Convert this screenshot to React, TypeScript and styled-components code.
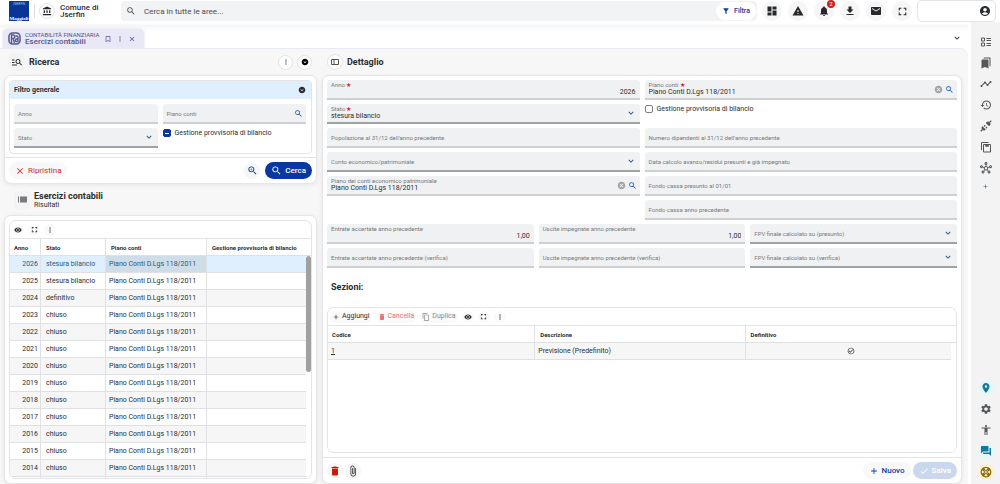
import React, { useCallback, useEffect, useId, useRef, useState } from "react";
import styled, { createGlobalStyle } from "styled-components";
import {
  MdAccessibility,
  MdAccountBalance,
  MdAccountCircle,
  MdAdd,
  MdAttachFile,
  MdBookmarkBorder,
  MdBookmarks,
  MdCancel,
  MdCheck,
  MdCheckCircleOutline,
  MdClose,
  MdContentCopy,
  MdDashboard,
  MdDelete,
  MdDownload,
  MdExpandCircleDown,
  MdExpandMore,
  MdFilterAlt,
  MdForum,
  MdFullscreen,
  MdHistory,
  MdLocationOn,
  MdMail,
  MdManageSearch,
  MdMoreVert,
  MdNotifications,
  MdOutlineHub,
  MdRemoveRedEye,
  MdSearch,
  MdSettings,
  MdTimeline,
  MdWarning,
  MdZoomIn,
} from "react-icons/md";

const GlobalStyle = createGlobalStyle`
  *, *::before, *::after { box-sizing: border-box; }
  body {
    margin: 0;
    background: #fff;
    color: #2b2d30;
    font-family: Roboto, "Liberation Sans", sans-serif;
    font-size: 7px;
    line-height: 9px;
  }
  button, input, select { font: inherit; color: inherit; margin: 0; padding: 0; }
  button { cursor: pointer; }
  svg { display: block; flex: none; }
  h1, h2, h3, p { margin: 0; }
`;

const Shell = styled.div`
  display: flex;
  flex-direction: column;
  height: 100vh;
  overflow: hidden;
`;

/* ---------- header ---------- */

const Header = styled.header`
  display: flex;
  align-items: center;
  flex: none;
  height: 22px;
  padding: 0 4px 0 9px;
  background: #fff;
`;

const Brand = styled.div`
  display: flex;
  align-items: center;
  width: 112px;
`;

const Divider = styled.span`
  width: 1px;
  height: 14px;
  margin: 0 4px 0 5px;
  background: #dcdde0;
`;

const RoundButton = styled.button<{ $size?: number; $tone?: string; $outlined?: boolean; $bg?: string }>`
  position: relative;
  display: inline-flex;
  align-items: center;
  justify-content: center;
  flex: none;
  width: ${(p) => p.$size ?? 12}px;
  height: ${(p) => p.$size ?? 12}px;
  border: ${(p) => (p.$outlined ? "1px solid #e2e3e6" : "0")};
  border-radius: 50%;
  background: ${(p) => p.$bg ?? (p.$outlined ? "#fff" : "#f6f6f6")};
  color: ${(p) => p.$tone ?? "#26282b"};
`;

const BrandName = styled.div`
  width: 48px;
  margin-left: 5px;
  font-size: 8px;
  line-height: 7px;
  font-weight: 500;
`;

const SearchBar = styled.div`
  display: flex;
  align-items: center;
  flex: 1;
  height: 20px;
  padding: 0 1px 0 5px;
  border-radius: 4px;
  background: #f1f3f4;
`;

const SearchInput = styled.input`
  flex: 1;
  min-width: 0;
  margin-left: 8px;
  border: 0;
  outline: 0;
  background: transparent;
  font-size: 8px;
  &::placeholder { color: #494c50; opacity: 1; }
`;

const FilterButton = styled.button`
  display: flex;
  align-items: center;
  gap: 4px;
  height: 18px;
  padding: 0 6px;
  border: 0;
  border-radius: 9px;
  background: #fff;
  color: #0a3da3;
  font-weight: 500;
`;

const HeaderActions = styled.div`
  display: flex;
  gap: 6px;
  margin: 0 5px;
`;

const Count = styled.span`
  position: absolute;
  top: -1px;
  right: -1px;
  width: 8px;
  height: 8px;
  border-radius: 50%;
  background: #cf1f1f;
  color: #fff;
  font-size: 6px;
  line-height: 8px;
  text-align: center;
`;

const UserBox = styled.button`
  display: flex;
  align-items: center;
  justify-content: flex-end;
  width: 79px;
  height: 22px;
  padding: 0 4px;
  border: 1px solid #e3e4e7;
  border-radius: 5px;
  background: #fff;
`;

/* ---------- frame ---------- */

const Frame = styled.div`
  display: flex;
  flex: 1;
  min-height: 0;
`;

const Main = styled.main`
  display: flex;
  flex-direction: column;
  flex: 1;
  min-width: 0;
  padding-right: 3px;
  background: #fff;
`;

const TabBar = styled.div`
  display: flex;
  align-items: flex-end;
  justify-content: space-between;
  flex: none;
  height: 26px;
  padding: 0 6px 0 3px;
  background: linear-gradient(#fff 2px, #f5f5f5 3px, #fff 9px);
`;

const Tab = styled.div`
  display: flex;
  align-items: center;
  width: 141px;
  height: 19px;
  padding: 0 5px;
  border-radius: 5px 5px 0 0;
  background: #e8e8f7;
  box-shadow: 0 0 3px #d9d9ec;
  color: #54568c;
`;

const TabText = styled.div`
  flex: 1;
  margin-left: 4px;
  font-size: 8px;
  line-height: 8px;
  font-weight: 500;
  white-space: nowrap;
`;

const TabArea = styled.div`
  font-size: 6px;
  line-height: 7px;
  font-weight: 400;
`;

const TabActions = styled.div`
  display: flex;
  align-items: center;
  gap: 4px;
  margin-right: 3px;
`;

const PlainButton = styled.button<{ $tone?: string }>`
  display: inline-flex;
  align-items: center;
  border: 0;
  background: transparent;
  color: ${(p) => p.$tone ?? "inherit"};
`;

const Collapse = styled(PlainButton)`
  height: 20px;
`;

const Workspace = styled.div`
  display: grid;
  grid-template-columns: minmax(0, 313fr) minmax(0, 640fr);
  gap: 5px;
  flex: 1;
  min-height: 0;
  padding: 0 6px 0 4px;
  border-top: 1px solid #eaeaf5;
  border-top-right-radius: 8px;
  background: #f7f7f7;
`;

const Column = styled.section`
  display: flex;
  flex-direction: column;
  min-height: 0;
`;

const PaneHead = styled.div`
  display: flex;
  align-items: center;
  flex: none;
  gap: 4px;
  height: 26px;
  padding: 0 5px;
`;

const PaneTitle = styled.h2`
  flex: 1;
  font-size: 9px;
  line-height: 11px;
  font-weight: 700;
`;

const HeadIcon = styled.span`
  display: inline-flex;
  align-items: center;
  justify-content: center;
  width: 16px;
  height: 18px;
  border-radius: 4px;
  background: #f3f3f3;
`;

const Card = styled.div<{ $fill?: boolean }>`
  display: flex;
  flex-direction: column;
  flex: ${(p) => (p.$fill ? "1" : "none")};
  min-height: 0;
  border: 1px solid #e6e6e8;
  border-radius: 7px;
  background: #fff;
  box-shadow: 0 1px 4px rgba(0, 0, 0, 0.08);
`;

const FilterBox = styled.fieldset`
  min-width: 0;
  margin: 4px 4px 3px;
  padding: 0;
  border: 1px solid #e3e5e8;
  border-radius: 4px;
  overflow: hidden;
`;

const FilterHead = styled.div`
  display: flex;
  align-items: center;
  justify-content: space-between;
  height: 18px;
  padding: 0 5px 0 4px;
  background: #e0effd;
  font-weight: 700;
`;

const FilterGrid = styled.div`
  display: grid;
  grid-template-columns: 1fr 1fr;
  gap: 4px 5px;
  padding: 5px 5px 5px 4px;
`;

const Footer = styled.div`
  display: flex;
  align-items: center;
  justify-content: space-between;
  flex: none;
  height: 26px;
  padding: 0 4px;
  border-top: 1px solid #e3e4e6;
`;

const Group = styled.div<{ $gap: number }>`
  display: flex;
  align-items: center;
  gap: ${(p) => p.$gap}px;
`;

const Pill = styled.button<{ $tone: string; $bg: string; $light?: boolean }>`
  display: inline-flex;
  align-items: center;
  gap: 3px;
  height: 17px;
  padding: 0 6px;
  border: 0;
  border-radius: 9px;
  background: ${(p) => p.$bg};
  color: ${(p) => p.$tone};
  font-size: 8px;
  font-weight: ${(p) => (p.$light ? 400 : 500)};
`;

/* ---------- fields ---------- */

const FieldBox = styled.div<{ $kind: string }>`
  position: relative;
  display: flex;
  align-items: center;
  gap: 2px;
  height: 20px;
  padding: 0 ${(p) => (p.$kind === "lookup" ? 3 : 4)}px;
  border-bottom: 2px solid ${(p) => (p.$kind === "select" ? "#9fa2a5" : "#cdcfd1")};
  border-radius: 3px 3px 0 0;
  background: #eff1f2;
`;

const FieldLabel = styled.label<{ $raised?: boolean }>`
  position: absolute;
  left: 4px;
  top: ${(p) => (p.$raised ? 1 : 6)}px;
  color: #76797d;
  font-size: 6px;
  line-height: 7px;
  white-space: nowrap;
  pointer-events: none;
`;

const Star = styled.span`
  margin-left: 1px;
  color: #d92020;
`;

const TextInput = styled.input<{ $right?: boolean; $lookup?: boolean }>`
  flex: 1;
  min-width: 0;
  height: 18px;
  padding: 6px 0 0 ${(p) => (p.$lookup ? 1 : 0)}px;
  border: 0;
  outline: 0;
  background: transparent;
  text-align: ${(p) => (p.$right ? "right" : "left")};
`;

const SelectInput = styled.select`
  appearance: none;
  flex: 1;
  min-width: 0;
  height: 18px;
  padding-top: 7px;
  border: 0;
  outline: 0;
  background: transparent;
`;

const CheckLabel = styled.label`
  display: flex;
  align-items: center;
  gap: 4px;
  height: 10px;
  white-space: nowrap;
`;

const Check = styled.input`
  appearance: none;
  display: grid;
  place-items: center;
  width: 8px;
  height: 8px;
  border: 1px solid #7c7f83;
  border-radius: 2px;
  background: #fff;
  &:indeterminate {
    border-color: #0a37a0;
    background: #0a37a0;
  }
  &:indeterminate::after {
    content: "";
    width: 4px;
    height: 1px;
    background: #fff;
  }
`;

const FormBody = styled.div`
  display: flex;
  flex-direction: column;
  flex: 1;
  min-height: 0;
  padding: 4px;
`;

const FormRow = styled.div<{ $cols: number }>`
  display: grid;
  grid-template-columns: repeat(${(p) => p.$cols}, minmax(0, 1fr));
  gap: 4px 5px;
  margin-bottom: 4px;
`;

const FormColumn = styled.div`
  display: grid;
  grid-auto-rows: 20px;
  gap: 4px;
`;

const SectionTitle = styled.h3`
  padding: 9px 4px 14px;
  font-size: 9px;
  line-height: 12px;
  font-weight: 700;
`;

/* ---------- grids ---------- */

const GridCard = styled.div<{ $margin?: number }>`
  display: flex;
  flex-direction: column;
  flex: 1;
  min-height: 0;
  margin: ${(p) => p.$margin ?? 0}px;
  border: 1px solid #e3e4e8;
  border-radius: 7px;
  overflow: hidden;
`;

const GridToolbar = styled.div`
  display: flex;
  align-items: center;
  flex: none;
  gap: 4px;
  height: 17px;
  padding: 0 2px;
`;

const ToolButton = styled.button<{ $tone?: string }>`
  display: inline-flex;
  align-items: center;
  gap: 2px;
  height: 12px;
  padding: 0 2px;
  border: 0;
  border-radius: 6px;
  background: #fafafa;
  color: ${(p) => p.$tone ?? "#2b2d30"};
`;

const ScrollFrame = styled.div`
  position: relative;
  display: flex;
  flex: 1;
  min-height: 0;
  border-top: 1px solid #e3e4e6;
`;

const Scroller = styled.div`
  flex: 1;
  min-width: 0;
  overflow-x: hidden;
  overflow-y: auto;
  scrollbar-width: none;
`;

const Gutter = styled.div`
  position: absolute;
  top: 17px;
  right: 0;
  bottom: 0;
  width: 5px;
  background: #fff;
`;

const Thumb = styled.div`
  position: relative;
  width: 5px;
  border-radius: 3px;
  background: #a0a0a0;
`;

const Table = styled.table`
  width: 100%;
  table-layout: fixed;
  border-collapse: separate;
  border-spacing: 0;
`;

const Th = styled.th<{ $w?: string; $first?: boolean }>`
  position: sticky;
  top: 0;
  width: ${(p) => p.$w ?? "auto"};
  height: 17px;
  padding: 0 5px;
  border-right: 1px solid #e0e1e4;
  border-bottom: 1px solid #dfe0e2;
  background: #fff;
  font-size: 6px;
  font-weight: 700;
  text-align: left;
  white-space: nowrap;
  &:first-child { padding-left: 4px; }
  &:last-child { border-right: 0; }
`;

const Td = styled.td<{ $align?: string; $active?: boolean; $pad?: number }>`
  height: 17px;
  padding: 0 ${(p) => p.$pad ?? 3}px;
  border-right: 1px solid #e0e1e4;
  border-bottom: 1px solid #dfe0e2;
  background: ${(p) => (p.$active ? "#cfdde9" : "transparent")};
  text-align: ${(p) => p.$align ?? "left"};
  white-space: nowrap;
  &:last-child { border-right: 0; }
  > svg { margin: 0 auto; }
`;

const Tr = styled.tr<{ $selected?: boolean; $shade?: boolean }>`
  background: ${(p) => (p.$selected ? "#e0effd" : p.$shade ? "#f6f6f7" : "#fff")};
  color: ${(p) => (p.$selected ? "#2d5876" : "inherit")};
`;

const CodeLink = styled.a`
  color: inherit;
  text-decoration: underline;
`;

const ResultsHead = styled.div`
  display: flex;
  align-items: center;
  gap: 4px;
  flex: none;
  height: 31px;
  padding: 0 10px;
`;

const ResultsTitle = styled.h2`
  font-size: 9px;
  line-height: 10px;
  font-weight: 700;
`;

const ResultsNote = styled.p`
  line-height: 8px;
`;

/* ---------- side rail ---------- */

const Rail = styled.nav`
  display: flex;
  flex-direction: column;
  justify-content: space-between;
  align-items: center;
  flex: none;
  width: 29px;
  padding: 12px 0 4px;
  background: #f3f3f3;
`;

const RailGroup = styled.div`
  display: flex;
  flex-direction: column;
  gap: 5px;
`;

const RailButton = styled.button<{ $tone?: string; $glow?: string; $short?: boolean }>`
  display: flex;
  align-items: center;
  justify-content: center;
  width: 16px;
  height: ${(p) => (p.$short ? 10 : 16)}px;
  border: 0;
  border-radius: 50%;
  background: ${(p) => p.$glow ?? "transparent"};
  color: ${(p) => p.$tone ?? "#54575a"};
`;

/* ---------- drawings ---------- */

const Logo = () => (
  <svg width="20" height="20" viewBox="0 0 20 20" role="img" aria-label="Maggioli">
    <rect width="20" height="20" fill="#0a3596" />
    <text x="10" y="4" fill="#b9c8ee" fontSize="3" fontFamily="Liberation Sans, sans-serif" textAnchor="middle">
      JSERFIN
    </text>
    <text x="10" y="19" fill="#fff" fontSize="5" fontWeight="700" fontFamily="Liberation Serif, serif" textAnchor="middle">
      Maggioli
    </text>
  </svg>
);

const TabLogo = () => (
  <svg width="13" height="13" viewBox="0 0 26 26" fill="none" stroke="currentColor">
    <rect x="2" y="2" width="22" height="22" rx="7" strokeWidth="3" />
    <path d="M7 22V6h3a3.500 3.500 0 0 1 0 7H7m3 0 3 9M15 8h3a2 2 0 0 1 2 2v9h-3a2.500 2.500 0 0 1 0-5h3" strokeWidth="2.600" />
  </svg>
);

const ListIcon = () => (
  <svg width="9" height="9" viewBox="0 0 18 18" fill="#77797c">
    <path d="M0 3h2v12H0zM4 3h14v12H4z" />
  </svg>
);

const ChecklistIcon = () => (
  <svg width="12" height="12" viewBox="0 0 24 24" fill="none" stroke="currentColor" strokeWidth="2">
    <path d="M3 4h6v6H3zM3 14h6v6H3zM13 5h9M13 9h9M13 15h9M13 19h9" />
  </svg>
);

const ColumnsIcon = () => (
  <svg width="8" height="8" viewBox="0 0 16 16" fill="none" stroke="#4a4032" strokeWidth="1.800">
    <path d="M1 3h14v10H1zM6 3v10" />
  </svg>
);

const PlugIcon = () => (
  <svg width="12" height="12" viewBox="0 0 24 24" fill="currentColor" stroke="currentColor">
    <path d="m12 6 6 6 2-2a4.500 4.500 0 0 0-6-6zM5 13l6 6-1 1a4.500 4.500 0 0 1-6-6z" />
    <path d="m19 5 3.500-3.500M5 19l-3.500 3.500M8 13l2.500-2.500M11.500 16.500 14 14" fill="none" strokeWidth="2.400" />
  </svg>
);

const ClipboardIcon = () => (
  <svg width="12" height="12" viewBox="0 0 24 24" fill="none" stroke="currentColor" strokeWidth="2">
    <path d="M17 3H3v15M7 7h14v15H7z" />
    <path d="M11 7h6v4h-6z" fill="currentColor" strokeWidth="1" />
  </svg>
);

const LifebuoyIcon = () => (
  <svg width="12" height="12" viewBox="0 0 24 24" fill="none" stroke="#8b6a0c">
    <circle cx="12" cy="12" r="9.500" strokeWidth="2.500" />
    <circle cx="12" cy="12" r="3" strokeWidth="2" />
    <path d="m5 5 4 4M19 5l-4 4M5 19l4-4M19 19l-4-4" strokeWidth="6" />
  </svg>
);

/* ---------- composed parts ---------- */

type FieldProps = {
  label: string;
  value?: string;
  required?: boolean;
  right?: boolean;
  kind?: "text" | "select" | "lookup";
  clearable?: boolean;
};

function Field({ label, value = "", required, right, kind = "text", clearable }: FieldProps) {
  const id = useId();
  return (
    <FieldBox $kind={kind}>
      <FieldLabel htmlFor={id} $raised={value !== ""}>
        {label}
        {required && <Star>★</Star>}
      </FieldLabel>
      {kind === "select" ? (
        <SelectInput id={id} defaultValue={value}>
          <option value={value}>{value}</option>
        </SelectInput>
      ) : (
        <TextInput id={id} defaultValue={value} $right={right} $lookup={kind === "lookup"} />
      )}
      {clearable && (
        <PlainButton $tone="#a2a4a6" aria-label="Svuota">
          <MdCancel size={9} />
        </PlainButton>
      )}
      {kind === "lookup" && (
        <PlainButton $tone="#1c50b4" aria-label="Cerca">
          <MdSearch size={9} />
        </PlainButton>
      )}
      {kind === "select" && <MdExpandMore size={10} color="#1d5482" />}
    </FieldBox>
  );
}

function CheckField({ label, mixed }: { label: string; mixed?: boolean }) {
  const ref = useRef<HTMLInputElement>(null);
  useEffect(() => {
    if (ref.current) ref.current.indeterminate = Boolean(mixed);
  }, [mixed]);
  return (
    <CheckLabel>
      <Check type="checkbox" ref={ref} />
      {label}
    </CheckLabel>
  );
}

const HEAD_HEIGHT = 17;

function ScrollArea({ children }: { children: React.ReactNode }) {
  const ref = useRef<HTMLDivElement>(null);
  const [thumb, setThumb] = useState({ size: 0, top: 0 });

  const measure = useCallback(() => {
    const el = ref.current;
    if (!el) return;
    const track = el.clientHeight - HEAD_HEIGHT;
    const content = el.scrollHeight - HEAD_HEIGHT;
    setThumb(
      content > track
        ? { size: Math.round((track * track) / content), top: Math.round((el.scrollTop * track) / content) }
        : { size: 0, top: 0 },
    );
  }, []);

  useEffect(() => {
    measure();
    window.addEventListener("resize", measure);
    return () => window.removeEventListener("resize", measure);
  }, [measure]);

  return (
    <ScrollFrame>
      <Scroller ref={ref} onScroll={measure}>
        {children}
      </Scroller>
      <Gutter>
        <Thumb style={{ height: thumb.size, top: thumb.top }} />
      </Gutter>
    </ScrollFrame>
  );
}

const PLAN = "Piano Conti D.Lgs 118/2011";

const years = Array.from({ length: 25 }, (_, i) => ({
  year: 2026 - i,
  state: i < 2 ? "stesura bilancio" : i === 2 ? "definitivo" : "chiuso",
}));

const GridTools = () => (
  <Group $gap={4}>
    <RoundButton aria-label="Visualizza" $bg="#fafafa">
      <MdRemoveRedEye size={8} />
    </RoundButton>
    <RoundButton aria-label="Schermo intero" $bg="#fafafa">
      <MdFullscreen size={9} />
    </RoundButton>
    <RoundButton aria-label="Altro" $bg="#fafafa">
      <MdMoreVert size={8} />
    </RoundButton>
  </Group>
);

export default function App() {
  return (
    <Shell>
      <GlobalStyle />
      <Header>
        <Brand>
          <Logo />
          <Divider />
          <RoundButton $size={16} $outlined aria-label="Ente">
            <MdAccountBalance size={10} />
          </RoundButton>
          <BrandName>Comune di Jserfin</BrandName>
        </Brand>
        <SearchBar>
          <MdSearch size={10} color="#4c4f52" />
          <SearchInput aria-label="Cerca" placeholder="Cerca in tutte le aree..." />
          <FilterButton>
            <MdFilterAlt size={8} />
            Filtra
          </FilterButton>
        </SearchBar>
        <HeaderActions>
          <RoundButton $size={20} aria-label="Cruscotto"><MdDashboard size={12} /></RoundButton>
          <RoundButton $size={20} aria-label="Avvisi"><MdWarning size={12} /></RoundButton>
          <RoundButton $size={20} aria-label="Notifiche">
            <MdNotifications size={12} />
            <Count>2</Count>
          </RoundButton>
          <RoundButton $size={20} aria-label="Download"><MdDownload size={12} /></RoundButton>
          <RoundButton $size={20} aria-label="Messaggi"><MdMail size={12} /></RoundButton>
          <RoundButton $size={20} aria-label="Schermo intero"><MdFullscreen size={13} /></RoundButton>
        </HeaderActions>
        <UserBox aria-label="Utente">
          <MdAccountCircle size={12} />
        </UserBox>
      </Header>

      <Frame>
        <Main>
          <TabBar>
            <Tab>
              <TabLogo />
              <TabText>
                <TabArea>CONTABILITÀ FINANZIARIA</TabArea>
                Esercizi contabili
              </TabText>
              <TabActions>
                <PlainButton aria-label="Segnalibro"><MdBookmarkBorder size={8} /></PlainButton>
                <PlainButton aria-label="Altro"><MdMoreVert size={8} /></PlainButton>
                <PlainButton aria-label="Chiudi"><MdClose size={8} /></PlainButton>
              </TabActions>
            </Tab>
            <Collapse aria-label="Espandi"><MdExpandMore size={10} /></Collapse>
          </TabBar>

          <Workspace>
            <Column>
              <PaneHead>
                <HeadIcon><MdManageSearch size={12} /></HeadIcon>
                <PaneTitle>Ricerca</PaneTitle>
                <RoundButton $size={15} $outlined $tone="#1d5482" aria-label="Altro"><MdMoreVert size={8} /></RoundButton>
                <RoundButton $size={15} $outlined $tone="#000" aria-label="Comprimi"><MdExpandCircleDown size={8} /></RoundButton>
              </PaneHead>

              <Card>
                <FilterBox>
                  <FilterHead>
                    Filtro generale
                    <PlainButton aria-label="Comprimi filtro"><MdExpandCircleDown size={8} /></PlainButton>
                  </FilterHead>
                  <FilterGrid>
                    <Field label="Anno" />
                    <Field label="Piano conti" kind="lookup" />
                    <Field label="Stato" kind="select" />
                    <CheckField label="Gestione provvisoria di bilancio" mixed />
                  </FilterGrid>
                </FilterBox>
                <Footer>
                  <Pill $tone="#cb2c2c" $bg="#f8f8f8" $light>
                    <MdClose size={10} />
                    Ripristina
                  </Pill>
                  <Group $gap={5}>
                    <RoundButton $size={16} $tone="#0a3da3" aria-label="Ricerca avanzata"><MdZoomIn size={11} /></RoundButton>
                    <Pill $tone="#fff" $bg="#0a37a0">
                      <MdSearch size={11} />
                      Cerca
                    </Pill>
                  </Group>
                </Footer>
              </Card>

              <ResultsHead>
                <HeadIcon><ListIcon /></HeadIcon>
                <div>
                  <ResultsTitle>Esercizi contabili</ResultsTitle>
                  <ResultsNote>Risultati</ResultsNote>
                </div>
              </ResultsHead>

              <Card $fill>
                <GridCard $margin={4}>
                  <GridToolbar>
                    <GridTools />
                  </GridToolbar>
                  <ScrollArea>
                    <Table>
                      <thead>
                        <tr>
                          <Th $w="31px">Anno</Th>
                          <Th $w="65px">Stato</Th>
                          <Th $w="101px">Piano conti</Th>
                          <Th>Gestione provvisoria di bilancio</Th>
                        </tr>
                      </thead>
                      <tbody>
                        {years.map((row, i) => (
                          <Tr key={row.year} $selected={i === 0} $shade={i % 2 === 0}>
                            <Td $align="right" $pad={2}>{row.year}</Td>
                            <Td $pad={5}>{row.state}</Td>
                            <Td $active={i === 0}>{PLAN}</Td>
                            <Td />
                          </Tr>
                        ))}
                      </tbody>
                    </Table>
                  </ScrollArea>
                </GridCard>
              </Card>
            </Column>

            <Column>
              <PaneHead>
                <RoundButton $size={16} $outlined aria-label="Pannelli"><ColumnsIcon /></RoundButton>
                <PaneTitle>Dettaglio</PaneTitle>
              </PaneHead>
              <Card $fill>
                <FormBody>
                  <FormRow $cols={2}>
                    <FormColumn>
                      <Field label="Anno" value="2026" required right />
                      <Field label="Stato" value="stesura bilancio" required kind="select" />
                      <Field label="Popolazione al 31/12 dell'anno precedente" />
                      <Field label="Conto economico/patrimoniale" kind="select" />
                      <Field label="Piano dei conti economico patrimoniale" value={PLAN} kind="lookup" clearable />
                    </FormColumn>
                    <FormColumn>
                      <Field label="Piano conti" value={PLAN} required kind="lookup" clearable />
                      <CheckField label="Gestione provvisoria di bilancio" />
                      <Field label="Numero dipendenti al 31/12 dell'anno precedente" />
                      <Field label="Data calcolo avanzo/residui presunti e già impegnato" />
                      <Field label="Fondo cassa presunto al 01/01" />
                      <Field label="Fondo cassa anno precedente" />
                    </FormColumn>
                  </FormRow>
                  <FormRow $cols={3}>
                    <Field label="Entrate accertate anno precedente" value="1,00" right />
                    <Field label="Uscite impegnate anno precedente" value="1,00" right />
                    <Field label="FPV finale calcolato su (presunto)" kind="select" />
                    <Field label="Entrate accertate anno precedente (verifica)" />
                    <Field label="Uscite impegnate anno precedente (verifica)" />
                    <Field label="FPV finale calcolato su (verifica)" kind="select" />
                  </FormRow>
                  <SectionTitle>Sezioni:</SectionTitle>
                  <GridCard>
                    <GridToolbar>
                      <ToolButton><MdAdd size={8} />Aggiungi</ToolButton>
                      <ToolButton $tone="#e57373"><MdDelete size={8} />Cancella</ToolButton>
                      <ToolButton $tone="#85878a"><MdContentCopy size={8} />Duplica</ToolButton>
                      <GridTools />
                    </GridToolbar>
                    <ScrollArea>
                      <Table>
                        <thead>
                          <tr>
                            <Th $w="33%">Codice</Th>
                            <Th>Descrizione</Th>
                            <Th>Definitivo</Th>
                          </tr>
                        </thead>
                        <tbody>
                          <Tr $shade>
                            <Td><CodeLink href="#1">1</CodeLink></Td>
                            <Td>Previsione (Predefinito)</Td>
                            <Td><MdCheckCircleOutline size={8} /></Td>
                          </Tr>
                        </tbody>
                      </Table>
                    </ScrollArea>
                  </GridCard>
                </FormBody>
                <Footer>
                  <Group $gap={2}>
                    <RoundButton $size={16} $tone="#c9190b" aria-label="Elimina"><MdDelete size={12} /></RoundButton>
                    <RoundButton $size={16} aria-label="Allegati"><MdAttachFile size={12} /></RoundButton>
                  </Group>
                  <Group $gap={2}>
                    <Pill $tone="#0a3da3" $bg="#f8f8f8"><MdAdd size={10} />Nuovo</Pill>
                    <Pill $tone="#fff" $bg="#cbd7ec" disabled><MdCheck size={10} />Salva</Pill>
                  </Group>
                </Footer>
              </Card>
            </Column>
          </Workspace>
        </Main>

        <Rail aria-label="Strumenti">
          <RailGroup>
            <RailButton aria-label="Elenco"><ChecklistIcon /></RailButton>
            <RailButton aria-label="Segnalibri"><MdBookmarks size={12} /></RailButton>
            <RailButton aria-label="Andamento"><MdTimeline size={12} /></RailButton>
            <RailButton aria-label="Cronologia"><MdHistory size={12} /></RailButton>
            <RailButton aria-label="Connessioni"><PlugIcon /></RailButton>
            <RailButton aria-label="Appunti"><ClipboardIcon /></RailButton>
            <RailButton aria-label="Rete"><MdOutlineHub size={12} /></RailButton>
            <RailButton aria-label="Aggiungi" $tone="#2b5c8a" $short><MdAdd size={7} /></RailButton>
          </RailGroup>
          <RailGroup>
            <RailButton aria-label="Posizione" $tone="#12799c" $glow="#e6f6fb"><MdLocationOn size={12} /></RailButton>
            <RailButton aria-label="Impostazioni"><MdSettings size={12} /></RailButton>
            <RailButton aria-label="Accessibilità"><MdAccessibility size={12} /></RailButton>
            <RailButton aria-label="Chat" $tone="#12799c" $glow="#e6f6fb"><MdForum size={12} /></RailButton>
            <RailButton aria-label="Assistenza" $glow="#fbf1cf"><LifebuoyIcon /></RailButton>
          </RailGroup>
        </Rail>
      </Frame>
    </Shell>
  );
}
